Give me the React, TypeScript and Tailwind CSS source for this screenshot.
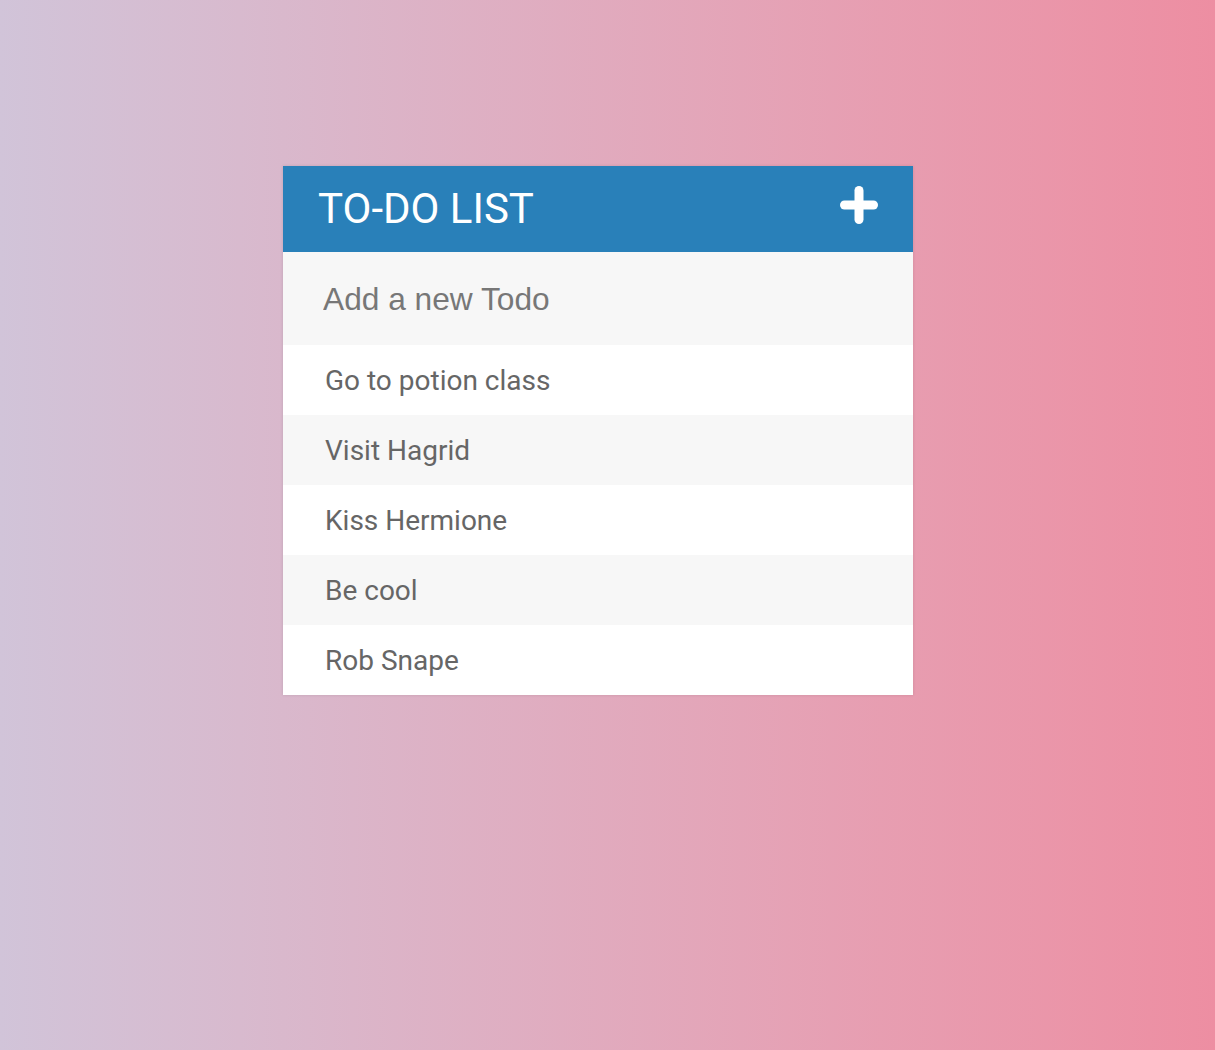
import React, { useState } from "react";

const initialTodos = [
  "Go to potion class",
  "Visit Hagrid",
  "Kiss Hermione",
  "Be cool",
  "Rob Snape",
];

const PlusIcon = () => (
  <svg width="38" height="38" viewBox="0 0 38 38" aria-hidden="true">
    <line x1="19" y1="4.5" x2="19" y2="33.5" stroke="white" strokeWidth="9" strokeLinecap="round" />
    <line x1="4.5" y1="19" x2="33.5" y2="19" stroke="white" strokeWidth="9" strokeLinecap="round" />
  </svg>
);

const App = () => {
  const [todos] = useState(initialTodos);
  const [text, setText] = useState("");

  return (
    <div className="min-h-[1050px] w-full bg-gradient-to-r from-[#d1c4d9] to-[#ed8ea2] pt-[166px]">
      <div
        className="ml-[283px] w-[630px] shadow-[0_0_3px_rgba(0,0,0,0.12)]"
        style={{ fontFamily: "Roboto, 'Liberation Sans', sans-serif" }}
      >
        {/* header */}
        <div className="flex h-[86px] items-center justify-between bg-[#2980b9] pl-[35px] pr-[35px]">
          <h1 className="text-[42px] font-normal uppercase leading-none text-white">To-Do List</h1>
          <button className="-mt-[9px]">
            <PlusIcon />
          </button>
        </div>

        {/* input */}
        <input
          type="text"
          value={text}
          onChange={(e) => setText(e.target.value)}
          placeholder="Add a new Todo"
          className="block h-[93px] w-full bg-[#f7f7f7] pl-[40px] pt-[2px] text-[31.7px] text-[#666] outline-none placeholder:text-[#777]"
          style={{ fontFamily: "'Liberation Sans', Arial, sans-serif" }}
        />

        {/* list */}
        <ul>
          {todos.map((todo, i) => (
            <li
              key={todo}
              className={`flex h-[70px] items-center pl-[42px] pt-[2px] text-[28px] text-[#666] ${
                i % 2 === 0 ? "bg-white" : "bg-[#f7f7f7]"
              }`}
            >
              {todo}
            </li>
          ))}
        </ul>
      </div>
    </div>
  );
};

export default App;
